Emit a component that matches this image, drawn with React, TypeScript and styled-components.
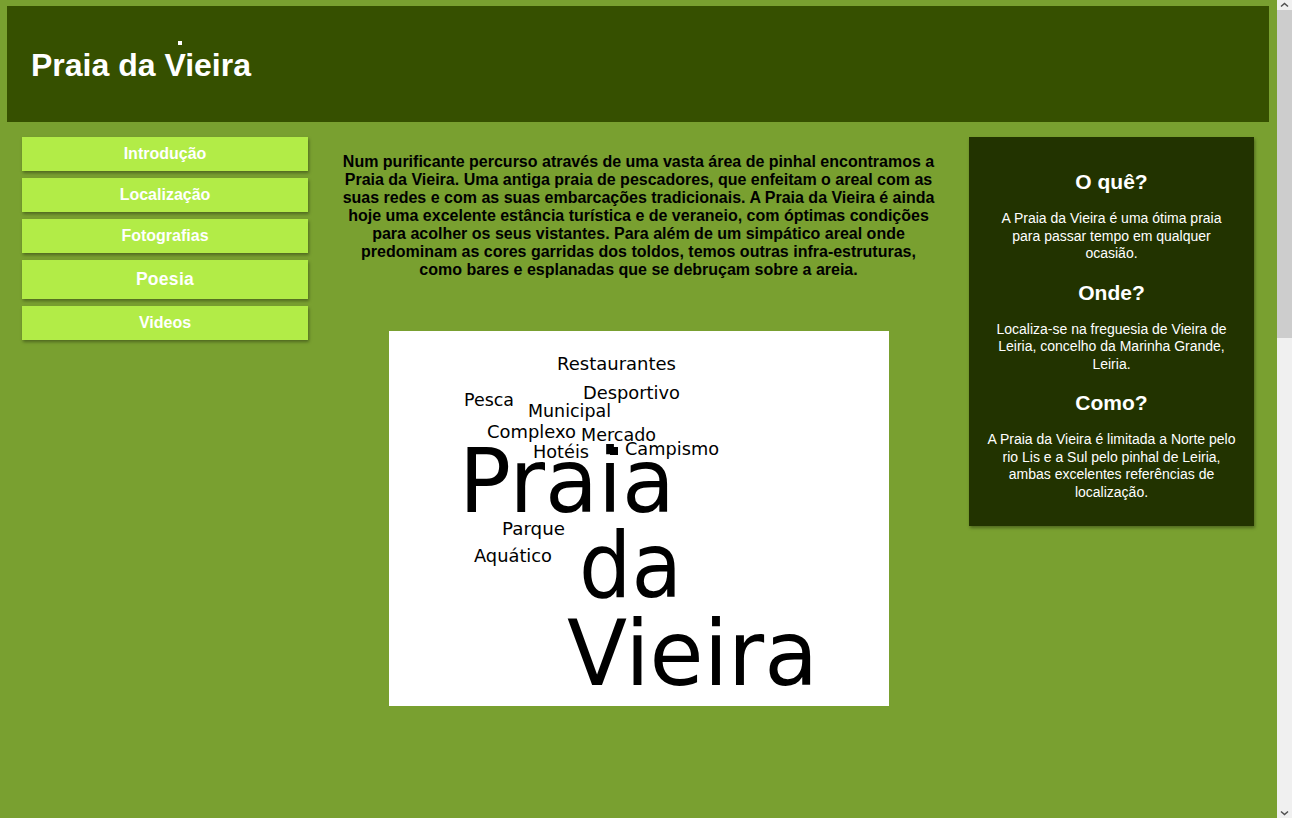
import React from "react";
import styled, { createGlobalStyle } from "styled-components";

const GlobalStyle = createGlobalStyle`
  html, body {
    margin: 0;
    padding: 0;
  }
  body {
    background-color: #79a030;
    font-family: "Liberation Sans", Arial, sans-serif;
  }
`;

const Page = styled.div`
  min-height: 1960px;
  padding: 6px 23px 0 7px;
`;

const Header = styled.header`
  height: 116px;
  background-color: #365000;
  display: flex;
  align-items: center;
  padding: 3px 0 0 24px;
  box-sizing: border-box;
`;

const Title = styled.h1`
  position: relative;
  margin: 0;
  color: #fff;
  font-size: 32px;
  font-weight: bold;
  line-height: 37px;
`;

const Dot = styled.span`
  position: absolute;
  left: 147px;
  top: -6px;
  width: 4px;
  height: 4px;
  background: #fff;
`;

const Columns = styled.div`
  display: grid;
  grid-template-columns: 286px 1fr 285px;
  column-gap: 33px;
  padding: 15px 15px 0 15px;
  align-items: start;
`;

const Nav = styled.nav`
  display: flex;
  flex-direction: column;
  gap: 7px;
`;

const NavButton = styled.a<{ $big?: boolean }>`
  display: block;
  height: ${(p) => (p.$big ? 39 : 34)}px;
  line-height: ${(p) => (p.$big ? 39 : 34)}px;
  background-color: #b2ec47;
  color: #fff;
  text-align: center;
  text-decoration: none;
  font-size: ${(p) => (p.$big ? 17.5 : 16)}px;
  font-weight: bold;
  letter-spacing: ${(p) => (p.$big ? "0.3px" : "0")};
  box-shadow: 1px 2px 3px rgba(0, 0, 0, 0.35);
  cursor: pointer;
`;

const Main = styled.main`
  display: flex;
  flex-direction: column;
  align-items: center;
`;

const Intro = styled.p`
  margin: 16px 0 0;
  font-size: 16px;
  font-weight: bold;
  line-height: 18px;
  color: #000;
  text-align: center;
`;

const Cloud = styled.svg`
  display: block;
  margin-top: 52px;
  background: #fff;
`;

const Aside = styled.aside`
  background-color: #223300;
  padding: 33px 17px 25px;
  box-shadow: 1px 2px 3px rgba(0, 0, 0, 0.35);
  color: #fff;
  text-align: center;
`;

const AsideTitle = styled.h3`
  margin: 0 0 17px;
  font-size: 21px;
  line-height: 23px;
  font-weight: bold;
`;

const AsideText = styled.p`
  margin: 0 0 18px;
  font-size: 14px;
  line-height: 17.5px;
  &:last-child {
    margin-bottom: 0;
  }
`;

const ScrollBar = styled.div`
  position: fixed;
  top: 0;
  right: 0;
  width: 15px;
  height: 100vh;
  background: #f0f0f0;
  display: flex;
  flex-direction: column;
`;

const ScrollArrow = styled.div`
  height: 10px;
  display: flex;
  align-items: center;
  justify-content: center;
  &:last-child {
    margin-top: auto;
  }
`;

const ScrollThumb = styled.div`
  height: 328px;
  background: #cdcdcd;
`;

const words: { t: string; x: number; y: number; s: number; w: number }[] = [
  { t: "Restaurantes", x: 168, y: 39, s: 17, w: 119 },
  { t: "Desportivo", x: 194, y: 68, s: 17, w: 97 },
  { t: "Pesca", x: 75, y: 75, s: 17, w: 50 },
  { t: "Municipal", x: 139, y: 86, s: 17, w: 83 },
  { t: "Complexo", x: 98, y: 107, s: 17, w: 89 },
  { t: "Mercado", x: 192, y: 110, s: 17, w: 75 },
  { t: "Hotéis", x: 144, y: 127, s: 17, w: 56 },
  { t: "Campismo", x: 236, y: 124, s: 17, w: 94 },
  { t: "Praia", x: 70, y: 181, s: 89, w: 216 },
  { t: "Parque", x: 113, y: 204, s: 17, w: 63 },
  { t: "Aquático", x: 85, y: 231, s: 17, w: 78 },
  { t: "da", x: 190, y: 266, s: 90, w: 103 },
  { t: "Vieira", x: 178, y: 354, s: 91, w: 251 },
];

function WordCloud() {
  return (
    <Cloud width={500} height={375} viewBox="0 0 500 375">
      <rect x={221} y={116} width={8} height={8} fill="#000" />
      {words.map((w) => (
        <text
          key={w.t}
          x={w.x}
          y={w.y}
          fontSize={w.s}
          fontFamily="'DejaVu Sans', sans-serif"
          fill="#000"
          textLength={w.w}
          lengthAdjust="spacingAndGlyphs"
        >
          {w.t}
        </text>
      ))}
    </Cloud>
  );
}

function Chevron({ down }: { down?: boolean }) {
  return (
    <svg width="9" height="6" viewBox="0 0 9 6">
      <path
        d={down ? "M1 1.5 L4.5 4.5 L8 1.5" : "M1 4.5 L4.5 1.5 L8 4.5"}
        fill="none"
        stroke="#505050"
        strokeWidth="1.5"
      />
    </svg>
  );
}

export default function App() {
  return (
    <>
      <GlobalStyle />
      <Page>
        <Header>
          <Title>
            Praia da Vieira
            <Dot />
          </Title>
        </Header>
        <Columns>
          <Nav>
            <NavButton>Introdução</NavButton>
            <NavButton>Localização</NavButton>
            <NavButton>Fotografias</NavButton>
            <NavButton $big>Poesia</NavButton>
            <NavButton>Videos</NavButton>
          </Nav>
          <Main>
            <Intro>
              Num purificante percurso através de uma vasta área de pinhal encontramos a
              Praia da Vieira. Uma antiga praia de pescadores, que enfeitam o areal com as
              suas redes e com as suas embarcações tradicionais. A Praia da Vieira é ainda
              hoje uma excelente estância turística e de veraneio, com óptimas condições
              para acolher os seus vistantes. Para além de um simpático areal onde
              predominam as cores garridas dos toldos, temos outras infra-estruturas,
              como bares e esplanadas que se debruçam sobre a areia.
            </Intro>
            <WordCloud />
          </Main>
          <Aside>
            <AsideTitle>O quê?</AsideTitle>
            <AsideText>
              A Praia da Vieira é uma ótima praia para passar tempo em qualquer ocasião.
            </AsideText>
            <AsideTitle>Onde?</AsideTitle>
            <AsideText>
              Localiza-se na freguesia de Vieira de Leiria, concelho da Marinha Grande,
              Leiria.
            </AsideText>
            <AsideTitle>Como?</AsideTitle>
            <AsideText>
              A Praia da Vieira é limitada a Norte pelo rio Lis e a Sul pelo pinhal de
              Leiria, ambas excelentes referências de localização.
            </AsideText>
          </Aside>
        </Columns>
      </Page>
      <ScrollBar>
        <ScrollArrow>
          <Chevron />
        </ScrollArrow>
        <ScrollThumb />
        <ScrollArrow>
          <Chevron down />
        </ScrollArrow>
      </ScrollBar>
    </>
  );
}
